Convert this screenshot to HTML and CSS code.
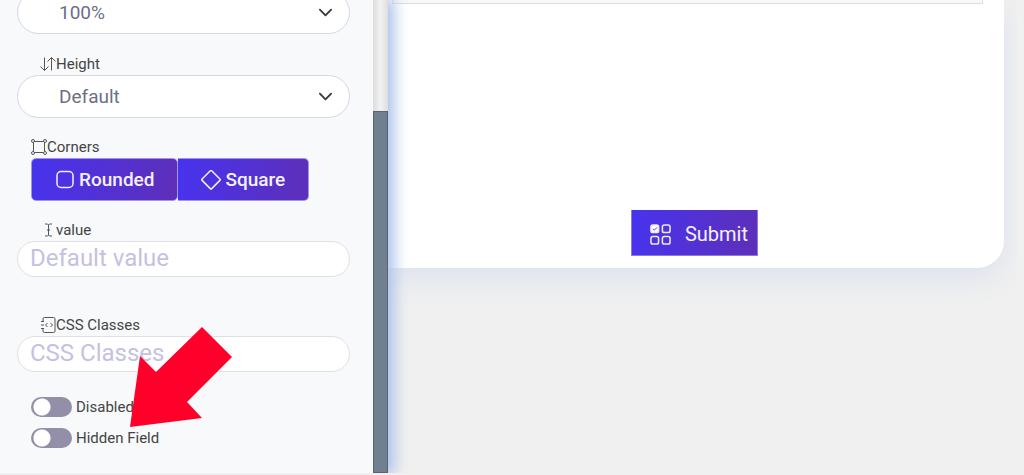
FILE: index.html
```html
<!DOCTYPE html>
<html lang="en">
<head>
<meta charset="utf-8">
<meta name="viewport" content="width=device-width, initial-scale=1">
<title>Form builder</title>
<link rel="stylesheet" href="styles.css">
</head>
<body>
<div class="app">
  <aside class="sidebar">
    <form class="settings">
      <select class="select select-first" aria-label="Width"><option>100%</option></select>
      <div class="field">
        <label class="label" for="height"><svg class="icon" viewBox="0 0 16 16"><path d="M4.5 1.5v13M.5 10.5l4 4 4-4M11.500 14.500V1.500M7.500 5.500l4-4 4 4"/></svg>Height</label>
        <select class="select" id="height"><option>Default</option></select>
      </div>
      <div class="field" role="group" aria-labelledby="corners">
        <span class="label label-start" id="corners"><svg class="icon" viewBox="0 0 16 16"><path d="M3.500 2.500h9M3.500 13.500h9M2.500 3.500v9M13.500 3.500v9"/><circle cx="2" cy="2" r="1.500"/><circle cx="14" cy="2" r="1.500"/><circle cx="2" cy="14" r="1.500"/><circle cx="14" cy="14" r="1.500"/></svg>Corners</span>
        <div class="corners">
          <button class="button rounded" type="button"><svg class="button-icon" viewBox="0 0 20 20"><rect x="2" y="1.500" width="16" height="16" rx="4"/></svg>Rounded</button>
          <button class="button square" type="button"><svg class="button-icon" viewBox="0 0 20 20"><path d="M9.300 .8q.7-.7 1.400 0l8.200 8.200q.7.700 0 1.400l-8.200 8.200q-.7.700-1.400 0L1.100 10.400q-.7-.7 0-1.400z"/></svg>Square</button>
        </div>
      </div>
      <div class="field">
        <label class="label" for="value"><svg class="icon" viewBox="0 0 16 16"><path d="M5 2h2.500l1 1 1-1H12M5 14h2.500l1-1 1 1H12M8.500 3v10M7 8h3"/></svg>value</label>
        <input class="input" id="value" type="text" placeholder="Default value">
      </div>
      <div class="field field-spaced">
        <label class="label" for="classes"><svg class="icon" viewBox="0 0 16 16"><path d="M3 4V2q0-1.500 1.500-1.500h9Q15 .500 15 2v12q0 1.500-1.500 1.500h-9Q3 15.500 3 14v-2M1 4.500h3M1 8h3M1 11.500h3M7.500 6L5.500 8l2 2M10.500 6l2 2-2 2"/></svg>CSS Classes</label>
        <input class="input" id="classes" type="text" placeholder="CSS Classes">
      </div>
      <div class="switches">
        <label class="switch-row"><input class="switch" type="checkbox">Disabled</label>
        <label class="switch-row"><input class="switch" type="checkbox">Hidden Field</label>
      </div>
    </form>
    <div class="scrollbar"><div class="thumb"></div></div>
  </aside>
  <main class="canvas">
    <section class="card">
      <div class="form-field"></div>
      <button class="submit" type="button"><svg class="submit-icon" viewBox="0 0 22 22"><rect class="filled" x="1" y="1" width="8" height="8" rx="2"/><rect x="13" y="1" width="8" height="8" rx="2"/><rect x="1" y="13" width="8" height="8" rx="2"/><rect x="13" y="13" width="8" height="8" rx="2"/><path class="tick" d="M3 5l1.500 1.500L7.500 3.500"/></svg>Submit</button>
    </section>
  </main>
  <svg class="arrow" viewBox="0 0 103 101" aria-hidden="true"><path d="M73 0l30 30-45 45 15 16L1 100 11 29l16 16z"/></svg>
</div>
</body>
</html>
```

FILE: styles.css
```css
* { box-sizing: border-box; }

body {
  margin: 0;
  background: #f0f0f0;
  color: #444;
  font-family: Roboto, sans-serif;
}

button, input, select { font-family: inherit; }

.app {
  position: relative;
  display: flex;
  height: 100vh;
  padding-bottom: 2px;
  overflow: hidden;
}

.sidebar {
  position: relative;
  z-index: 1;
  display: flex;
  flex: 0 0 388px;
  background: #f8f9fb;
  box-shadow: 4px 0 14px 2px #a9c0e9;
  clip-path: inset(0 -30px 0 0);
}

.settings {
  display: flex;
  flex: 1;
  flex-direction: column;
  gap: 16px;
  margin-top: -9px;
  padding: 0 23px 0 17px;
}

.field { display: flex; flex-direction: column; }
.field-spaced { padding-top: 19px; }

.label {
  display: flex;
  align-items: center;
  height: 24px;
  padding-top: 2px;
  padding-left: 23px;
  font-size: 15px;
  line-height: 22px;
}

.label-start { padding-left: 14px; }

.icon {
  width: 16px;
  height: 16px;
  fill: none;
  stroke: #555;
  stroke-width: 1;
}

.select {
  width: 100%;
  height: 43px;
  padding: 0 41px;
  appearance: none;
  border: 1px solid #d3d8e1;
  border-radius: 22px;
  background: #fff url("data:image/svg+xml,%3Csvg xmlns='http://www.w3.org/2000/svg' viewBox='0 0 16 16'%3E%3Cpath fill='none' stroke='%23343a40' stroke-width='2' stroke-linecap='round' stroke-linejoin='round' d='M2 5l6 6 6-6'/%3E%3C/svg%3E") no-repeat right 16px center / 15px 15px;
  color: #6b7085;
  font-size: 19px;
}

.select-first { margin-bottom: 1px; }

.corners { display: flex; padding-left: 14px; }

.button {
  display: flex;
  align-items: center;
  justify-content: center;
  gap: 4px;
  height: 43px;
  padding: 0 23px;
  border: 1px solid #a294e8;
  background: linear-gradient(100deg, #4733ef, #5e2fb8) border-box;
  color: #f4f0ff;
  font-size: 19px;
  font-weight: 500;
}

.rounded { border-radius: 5px; }
.square { border-left: 0; border-radius: 0 5px 5px 0; }

.button-icon {
  width: 20px;
  height: 20px;
  fill: none;
  stroke: #f4f0ff;
  stroke-width: 1.500;
}

.input {
  width: 100%;
  height: 36px;
  padding: 0 12px 3px;
  border: 1px solid #dee0e5;
  border-radius: 18px;
  background: #fff;
  font-size: 24px;
}

.input::placeholder { color: #c4c1e3; opacity: 1; }

.switches {
  display: flex;
  flex-direction: column;
  gap: 11px;
  padding: 9px 14px 0;
}

.switch-row {
  display: flex;
  align-items: center;
  gap: 4px;
  font-size: 15px;
  line-height: 20px;
}

.switch {
  width: 41px;
  height: 20px;
  margin: 0;
  appearance: none;
  border-radius: 10px;
  background: radial-gradient(circle at 11px 10px, #fff 8px, #938fa8 9px);
}

.scrollbar {
  flex: 0 0 15px;
  padding-top: 111px;
  background: linear-gradient(90deg, #dcdcdc, #f2f2f2 50%, #dedede);
}

.thumb {
  height: 100%;
  border: 1px solid #566373;
  background: #708090;
}

.canvas {
  flex: 1;
  margin-right: 7px;
  padding-right: 13px;
  overflow: hidden;
}

.card {
  display: flex;
  flex-direction: column;
  align-items: center;
  padding-bottom: 12px;
  border-radius: 0 0 27px 0;
  background: #fff;
  box-shadow: 0 10px 30px #dbe1ee;
}

.form-field {
  align-self: stretch;
  height: 4px;
  margin: 0 21px 206px 4px;
  border: 1px solid #dedee4;
  border-top: 0;
  background: #f8f8fa;
}

.submit {
  display: flex;
  align-items: center;
  gap: 14px;
  height: 46px;
  margin-right: 3px;
  padding: 3px 9px 0 18px;
  border: 1px solid #8d7ae0;
  border-top: 0;
  background: linear-gradient(100deg, #4733ef, #5e2fb8) border-box;
  color: #f4f0ff;
  font-size: 20px;
}

.submit-icon {
  width: 21px;
  height: 21px;
  fill: none;
  stroke: #eee9ff;
  stroke-width: 1.600;
}

.filled { fill: #fff; }
.tick { stroke: #5534df; stroke-width: 1; }

.arrow {
  position: absolute;
  z-index: 2;
  top: 327px;
  left: 129px;
  width: 103px;
  height: 101px;
  fill: #ff002b;
}
```
